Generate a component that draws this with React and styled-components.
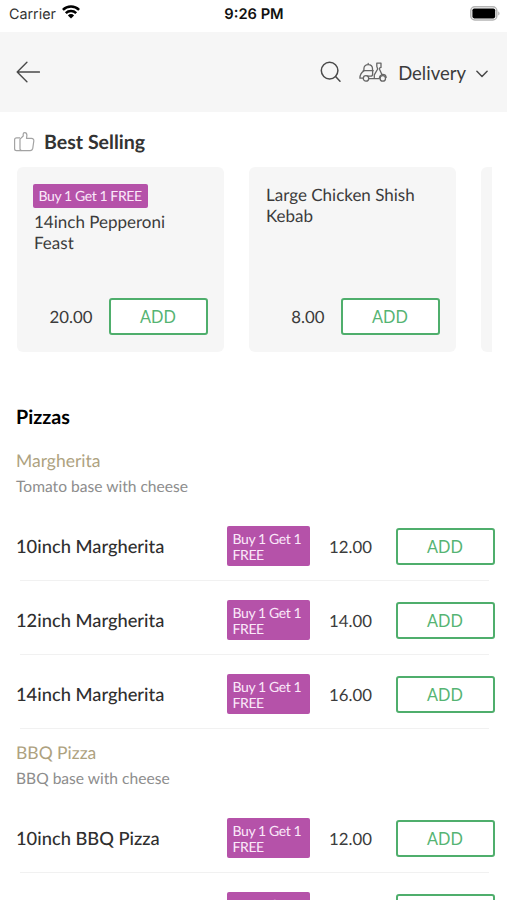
import React from 'react'
import styled, { createGlobalStyle } from 'styled-components'

const bestSelling = [
  { name: '14inch Pepperoni Feast', price: '20.00', offer: 'Buy 1 Get 1 FREE' },
  { name: 'Large Chicken Shish Kebab', price: '8.00' },
]

const pizzas = [
  {
    name: 'Margherita',
    description: 'Tomato base with cheese',
    items: [
      { name: '10inch Margherita', price: '12.00' },
      { name: '12inch Margherita', price: '14.00' },
      { name: '14inch Margherita', price: '16.00' },
    ],
  },
  {
    name: 'BBQ Pizza',
    description: 'BBQ base with cheese',
    items: [
      { name: '10inch BBQ Pizza', price: '12.00' },
      { name: '12inch BBQ Pizza', price: '14.00' },
    ],
  },
]

const WifiIcon = () => (
  <svg width="18" height="14" viewBox="0 0 18 14" fill="none" stroke="#000" strokeWidth="2.5">
    <path d="M0.9 4.9a11.5 11.5 0 0 1 16.2 0" />
    <path d="M3.8 8.2a7.4 7.4 0 0 1 10.4 0" />
    <path d="M9 13.6 5.9 10.4a4.4 4.4 0 0 1 6.2 0Z" fill="#000" stroke="none" />
  </svg>
)

const BatteryIcon = () => (
  <svg width="30" height="15" viewBox="0 0 30 15">
    <rect x="0.8" y="0.8" width="26" height="13.2" rx="4" fill="#fff" stroke="#b5b5b5" strokeWidth="1.5" />
    <rect x="2.4" y="2.4" width="22.8" height="10" rx="1.8" fill="#000" />
    <path d="M28.3 5.2c1.6.7 1.6 3.7 0 4.4z" fill="#a8a8a8" />
  </svg>
)

const BackIcon = () => (
  <svg width="24" height="22" viewBox="0 0 24 22" fill="none" stroke="#4a4a4a" strokeWidth="1.4" strokeLinecap="round" strokeLinejoin="round">
    <path d="M23.4 11H1.2M10.9 1.2 1.2 11l9.7 9.8" />
  </svg>
)

const SearchIcon = () => (
  <svg width="22" height="22" viewBox="0 0 22 22" fill="none" stroke="#4a4a4a" strokeWidth="1.5" strokeLinecap="round">
    <circle cx="9.6" cy="9.6" r="8.3" />
    <path d="m15.6 15.6 4.4 4.6" />
  </svg>
)

const ScooterIcon = () => (
  <svg width="28" height="20" viewBox="0 0 28 20" fill="none" stroke="#666" strokeWidth="1.3" strokeLinecap="round" strokeLinejoin="round">
    <path d="M9.2 2.6V1.4M4.9 8.6V6.8c0-2.5 1.8-4.2 4.3-4.2s4.3 1.7 4.3 4.2v1.8M4.2 8.7h10" />
    <path d="M4.9 8.9C2.4 10.4 1 13 .9 16.2h3.2M13.6 8.9v3.3c0 1.2-.8 2-2 2H8.4" />
    <path d="M10 16.6h10.2c.1-2 1-3.3 2.7-4.1l-2.4-5.2c-.4-1 .3-1.7 1.5-1.9V1.2h-4.2v3.2l.9 2.6-3.4 5.8v3.6M22.9 12.5c2.3-.2 4 .8 4.3 2.9" />
    <circle cx="7" cy="16.4" r="2.7" />
    <circle cx="23.8" cy="16.4" r="2.7" />
  </svg>
)

const ChevronIcon = () => (
  <svg width="12" height="8" viewBox="0 0 12 8" fill="none" stroke="#4a4a4a" strokeWidth="1.5" strokeLinecap="round" strokeLinejoin="round">
    <path d="m.9 1.3 5.1 5.2 5.1-5.2" />
  </svg>
)

const ThumbIcon = () => (
  <svg width="22" height="20" viewBox="0 0 22 20" fill="none" stroke="#a3a3a3" strokeWidth="1.2" strokeLinejoin="round">
    <path d="M7 7.2 10.2 4V2c0-1 .7-1.4 1.5-1.4 1.5 0 2.2 1.2 2.2 2.8l-.4 3h5c1.6 0 2.5 1 2.3 2.6l-1 7.2c-.3 1.6-1.1 2.5-2.7 2.5H9.2c-1.3 0-2.2-.6-2.2-2Z" />
    <path d="M7 5.8H3.6c-1.3 0-2 .8-2 2v9c0 1.2.7 1.9 2 1.9h4.6" />
  </svg>
)

const Item = ({ item }) => (
  <ItemRow>
    <ItemName>{item.name}</ItemName>
    <RowOffer>Buy 1 Get 1 FREE</RowOffer>
    <ItemPrice>{item.price}</ItemPrice>
    <AddButton>ADD</AddButton>
  </ItemRow>
)

const App = () => {
  return (
    <Screen>
      <GlobalStyle />
      <StatusBar>
        <Carrier>
          <span>Carrier</span>
          <WifiIcon />
        </Carrier>
        <Time>9:26 PM</Time>
        <Battery>
          <BatteryIcon />
        </Battery>
      </StatusBar>

      <Header>
        <IconButton aria-label="Back">
          <BackIcon />
        </IconButton>
        <Actions>
          <IconButton aria-label="Search">
            <SearchIcon />
          </IconButton>
          <DeliveryButton>
            <ScooterIcon />
            <span>Delivery</span>
            <ChevronIcon />
          </DeliveryButton>
        </Actions>
      </Header>

      <BestTitle>
        <ThumbIcon />
        Best Selling
      </BestTitle>
      <Cards>
        {bestSelling.map((item) => (
          <Card key={item.name}>
            {item.offer && <CardOffer>{item.offer}</CardOffer>}
            <CardName $offer={!!item.offer}>{item.name}</CardName>
            <CardFooter>
              <CardPrice>{item.price}</CardPrice>
              <AddButton>ADD</AddButton>
            </CardFooter>
          </Card>
        ))}
        <Card />
      </Cards>

      <CategoryTitle>Pizzas</CategoryTitle>
      {pizzas.map((group) => (
        <section key={group.name}>
          <GroupName>{group.name}</GroupName>
          <GroupText>{group.description}</GroupText>
          {group.items.map((item) => (
            <Item key={item.name} item={item} />
          ))}
        </section>
      ))}
    </Screen>
  )
}

const GlobalStyle = createGlobalStyle`
  * {
    box-sizing: border-box;
  }
  body {
    margin: 0;
    background: #fff;
  }
  svg {
    display: block;
    flex-shrink: 0;
  }
  button {
    padding: 0;
    border: 0;
    background: none;
    font-family: inherit;
    color: inherit;
  }
`

const Screen = styled.main`
  height: 900px;
  overflow: hidden;
  background: #fff;
  color: #3c3c3c;
  font-family: Lato, sans-serif;
  text-rendering: geometricPrecision;
`

const StatusBar = styled.div`
  display: grid;
  grid-template-columns: 1fr auto 1fr;
  height: 32px;
  padding: 5px 7px 0 8px;
  font-family: Inter, sans-serif;
  line-height: 17px;
`

const Carrier = styled.div`
  display: flex;
  gap: 6px;
  padding-left: 1px;
  font-size: 14.3px;
  color: #333;

  span {
    margin-top: 1px;
  }
`

const Time = styled.div`
  margin-top: 1px;
  font-size: 14.7px;
  font-weight: 600;
  color: #111;
`

const Battery = styled.div`
  display: flex;
  justify-content: flex-end;
  padding-top: 1px;
`

const Header = styled.header`
  display: flex;
  align-items: center;
  justify-content: space-between;
  height: 80px;
  padding: 0 19px 0 16px;
  background: #f6f6f6;
`

const IconButton = styled.button`
  display: flex;
`

const Actions = styled.div`
  display: flex;
  align-items: center;
  gap: 17px;
`

const DeliveryButton = styled.button`
  display: flex;
  align-items: center;
  font-size: 18.5px;
  line-height: 22px;

  span {
    margin: 1px 10px 0 11px;
  }
  svg:last-child {
    margin-top: 3px;
  }
`

const BestTitle = styled.h2`
  display: flex;
  align-items: center;
  gap: 9px;
  height: 55px;
  margin: 0;
  padding: 5px 0 0 13px;
  font-size: 19.6px;
  font-weight: 700;
  color: #333;
`

const Cards = styled.div`
  display: flex;
  gap: 25px;
  height: 185px;
  margin: 0 15px 0 17px;
  overflow: hidden;
`

const Card = styled.article`
  display: flex;
  flex-direction: column;
  align-items: flex-start;
  flex: 0 0 207px;
  padding: 17px 16.5px 17.5px 16px;
  border-radius: 6px;
  background: #f6f6f6;
`

const Offer = styled.div`
  border-radius: 2px;
  background: #b552a9;
  color: #fbe9fa;
  font-size: 14px;
  letter-spacing: -0.4px;
`

const CardOffer = styled(Offer)`
  width: 115px;
  height: 24px;
  padding-left: 5.5px;
  line-height: 24px;
  white-space: nowrap;
`

const CardName = styled.div`
  width: 160px;
  margin: ${(p) => (p.$offer ? '4px 0 0 1px' : '1px 0 0 1px')};
  font-size: 17px;
  line-height: 20.5px;
`

const CardFooter = styled.div`
  display: flex;
  align-items: center;
  align-self: flex-end;
  gap: 16px;
  margin-top: auto;
`

const CardPrice = styled.span`
  font-size: 16.8px;
`

const AddButton = styled.button`
  flex-shrink: 0;
  width: 99px;
  height: 37px;
  padding-top: 1px;
  border: 2px solid #4fae6c;
  border-radius: 3px;
  background: #fff;
  color: #55b473;
  font-size: 16.3px;
`

const CategoryTitle = styled.h2`
  margin: 0;
  padding: 54px 0 7px 16px;
  font-size: 19.7px;
  font-weight: 700;
  line-height: 24px;
  color: #000;
`

const GroupName = styled.h3`
  margin: 0;
  padding: 13px 16px 4px;
  font-size: 17.5px;
  font-weight: 400;
  line-height: 22px;
  color: #aea27f;
`

const GroupText = styled.p`
  margin: 0;
  padding: 0 16px 9px;
  font-size: 15.6px;
  line-height: 22px;
  color: #8d8d8d;
`

const ItemRow = styled.div`
  display: grid;
  grid-template-columns: 210.5px 83.5px 85.5px 99px;
  align-items: center;
  height: 74px;
  padding: 4px 12px 0 16px;
  background: linear-gradient(#f1f1f1, #f1f1f1) 20px 100% / 469px 1px no-repeat;
`

const ItemName = styled.div`
  font-size: 18.3px;
  font-weight: 500;
  color: #2f2f2f;
`

const RowOffer = styled(Offer)`
  height: 40px;
  padding: 5px 6px 3px;
  line-height: 16px;
`

const ItemPrice = styled.div`
  padding-left: 19px;
  font-size: 16.8px;
`

export default App
